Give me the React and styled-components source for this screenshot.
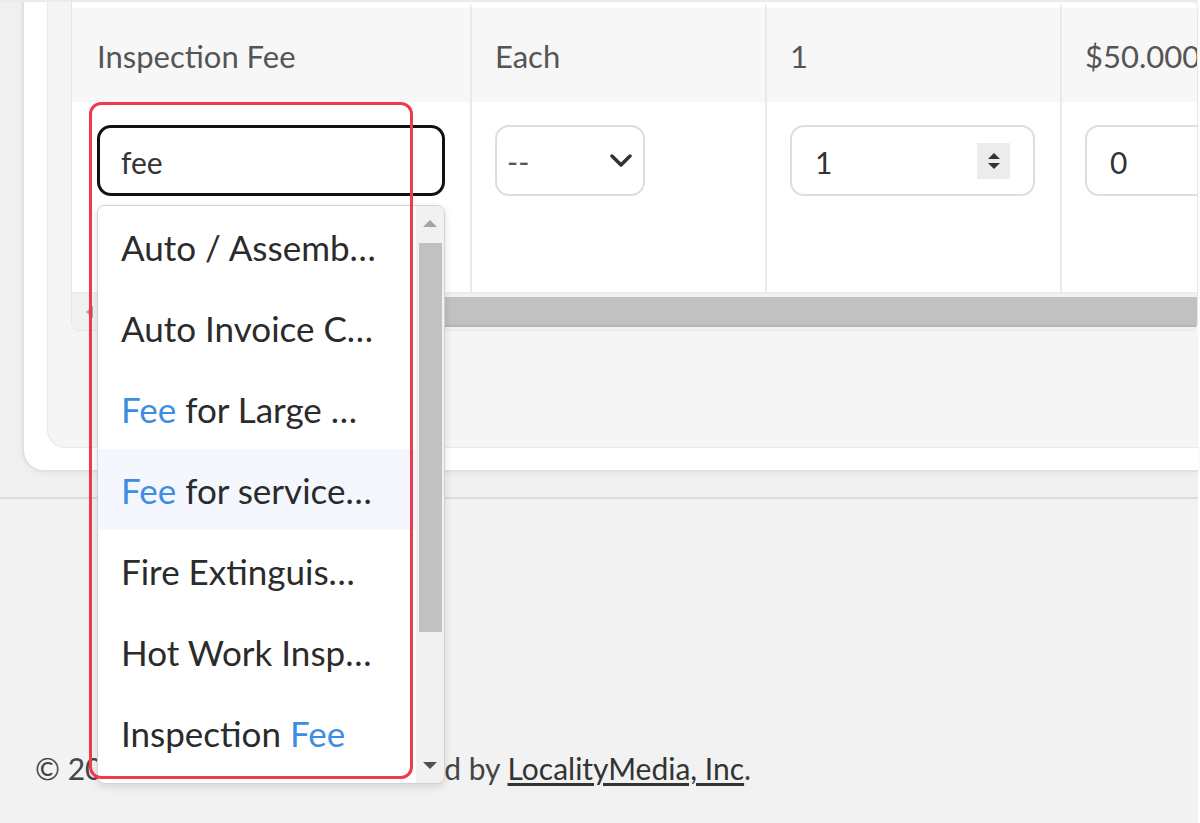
import React from "react";
import styled, { createGlobalStyle } from "styled-components";

const GlobalStyle = createGlobalStyle`
  html, body {
    margin: 0;
    padding: 0;
  }
  body {
    width: 1200px;
    height: 823px;
    overflow: hidden;
    background: #fff;
    font-family: Lato, "Open Sans", sans-serif;
    color: #333;
  }
  * {
    box-sizing: border-box;
  }
`;

const options = [
  { text: "Auto / Assemb…" },
  { text: "Auto Invoice C…" },
  { pre: "", match: "Fee", text: " for Large …" },
  { pre: "", match: "Fee", text: " for service…", hover: true },
  { text: "Fire Extinguis…" },
  { text: "Hot Work Insp…" },
  { pre: "Inspection ", match: "Fee", text: "" },
];

const App = () => {
  return (
    <Page>
      <GlobalStyle />
      <Main>
        <Card>
          <Panel>
            <TableWrap>
              <Grid>
                <HeadCell first>Inspection Fee</HeadCell>
                <HeadCell>Each</HeadCell>
                <HeadCell>1</HeadCell>
                <HeadCell>$50.000</HeadCell>

                <BodyCell first>
                  <SearchInput>fee</SearchInput>
                </BodyCell>
                <BodyCell>
                  <SelectBox>
                    <span>--</span>
                    <svg width="22" height="14" viewBox="0 0 22 14">
                      <polyline
                        points="2,2 11,11 20,2"
                        fill="none"
                        stroke="#333"
                        strokeWidth="3.5"
                        strokeLinecap="round"
                        strokeLinejoin="round"
                      />
                    </svg>
                  </SelectBox>
                </BodyCell>
                <BodyCell>
                  <NumberBox>
                    <span>1</span>
                    <Spinner>
                      <svg width="16" height="26" viewBox="0 0 16 26">
                        <polygon points="8,5 14,11 2,11" fill="#333" />
                        <polygon points="2,15 14,15 8,21" fill="#333" />
                      </svg>
                    </Spinner>
                  </NumberBox>
                </BodyCell>
                <BodyCell>
                  <NumberBox wide>
                    <span>0</span>
                  </NumberBox>
                </BodyCell>
              </Grid>
              <HScroll>
                <ScrollArrow>
                  <svg width="10" height="14" viewBox="0 0 10 14">
                    <polygon points="2,7 9,1 9,13" fill="#a3a3a3" />
                  </svg>
                </ScrollArrow>
                <HThumb />
              </HScroll>
            </TableWrap>
          </Panel>
        </Card>
      </Main>
      <Footer>
        © 2024 Permit Portals. Powered by{" "}
        <FooterLink href="#">LocalityMedia, Inc</FooterLink>.
      </Footer>

      <Dropdown>
        <OptionList>
          {options.map((o, i) => (
            <Option key={i} hover={o.hover}>
              {o.pre}
              {o.match && <Match>{o.match}</Match>}
              {o.text}
            </Option>
          ))}
        </OptionList>
        <VScroll>
          <VArrow>
            <svg width="16" height="10" viewBox="0 0 16 10">
              <polygon points="1,9 8,2 15,9" fill="#a3a3a3" />
            </svg>
          </VArrow>
          <VThumb />
          <VSpace />
          <VArrow>
            <svg width="16" height="10" viewBox="0 0 16 10">
              <polygon points="1,1 15,1 8,8" fill="#505050" />
            </svg>
          </VArrow>
        </VScroll>
      </Dropdown>
      <Callout />
    </Page>
  );
};

export default App;

const Page = styled.div`
  position: relative;
  width: 1198px;
  height: 823px;
  display: flex;
  flex-direction: column;
  background: #f2f2f2;
`;

const Main = styled.main`
  background: #f0f0f0;
  border-top: 2px solid #ebebed;
  border-bottom: 2px solid #dcdcdc;
  padding: 0 0 25px 22px;
`;

const Card = styled.section`
  background: #fff;
  border-left: 2px solid #e1e1e1;
  border-bottom: 2px solid #e1e1e1;
  border-radius: 0 0 0 22px;
  padding: 0 0 22px 23px;
  box-shadow: 0 2px 4px rgba(0, 0, 0, 0.04);
`;

const Panel = styled.div`
  background: #f5f5f5;
  border-left: 1px solid #e9e9e9;
  border-bottom: 1px solid #e9e9e9;
  border-radius: 0 0 0 18px;
  padding: 0 0 116px 23px;
`;

const TableWrap = styled.div`
  background: #fff;
  border: 1px solid #e6e6e6;
  border-top: none;
  border-radius: 0 8px 8px 8px;
  overflow: hidden;
`;

const Grid = styled.div`
  display: grid;
  grid-template-columns: 398px 295px 295px 300px;
  grid-template-rows: 100px 192px;
`;

const HeadCell = styled.div`
  display: flex;
  align-items: center;
  background: #f7f7f7;
  background-clip: padding-box;
  border-top: 6px solid #fff;
  border-left: ${(p) => (p.first ? "none" : "2px solid #e9e9e9")};
  padding: 2px 0 0 ${(p) => (p.first ? "25px" : "23px")};
  font-size: 31px;
  color: #555;
  white-space: nowrap;
`;

const BodyCell = styled.div`
  display: flex;
  align-items: flex-start;
  background: #fff;
  border-left: ${(p) => (p.first ? "none" : "2px solid #e9e9e9")};
  border-bottom: 2px solid #ececec;
  padding: 23px 0 0 ${(p) => (p.first ? "25px" : "23px")};
`;

const SearchInput = styled.div`
  width: 348px;
  height: 71px;
  border: 3px solid #111;
  border-radius: 14px;
  display: flex;
  align-items: center;
  padding: 3px 0 0 21px;
  font-size: 30px;
  color: #333;
`;

const SelectBox = styled.div`
  width: 150px;
  height: 71px;
  border: 2px solid #dedede;
  border-radius: 14px;
  display: flex;
  align-items: center;
  justify-content: space-between;
  padding: 0 11px 0 10px;
  font-size: 30px;
  color: #555;
`;

const NumberBox = styled.div`
  width: ${(p) => (p.wide ? "300px" : "245px")};
  height: 71px;
  border: 2px solid #dedede;
  border-radius: 14px;
  display: flex;
  align-items: center;
  justify-content: space-between;
  padding: 2px 23px 0 23px;
  font-size: 30px;
  color: #333;
`;

const Spinner = styled.span`
  width: 33px;
  height: 36px;
  margin-top: -2px;
  background: #ececec;
  display: flex;
  align-items: center;
  justify-content: center;
`;

const HScroll = styled.div`
  height: 36px;
  background: #f1f1f1;
  display: flex;
  align-items: center;
`;

const ScrollArrow = styled.div`
  width: 34px;
  display: flex;
  justify-content: center;
`;

const HThumb = styled.div`
  flex: 1;
  height: 30px;
  background: #c1c1c1;
  border-bottom: 2px solid #b5b5b5;
`;

const Footer = styled.footer`
  flex: 1;
  background: #f2f2f2;
  padding: 251px 0 0 35px;
  font-size: 30px;
  line-height: 36px;
  color: #444;
  white-space: nowrap;
`;

const FooterLink = styled.a`
  color: #333;
  text-decoration: underline;
  text-underline-offset: 3px;
`;

const Dropdown = styled.div`
  position: absolute;
  left: 97px;
  top: 205px;
  width: 348px;
  height: 579px;
  display: flex;
  background: #fff;
  border: 1px solid #d2d2d2;
  border-radius: 8px;
  box-shadow: 0 3px 8px rgba(0, 0, 0, 0.12);
  overflow: hidden;
  z-index: 5;
`;

const OptionList = styled.div`
  flex: 1;
  overflow: hidden;
`;

const Option = styled.div`
  height: 81px;
  display: flex;
  align-items: center;
  padding-left: 23px;
  font-size: 35px;
  color: #2b2b2b;
  white-space: pre;
  background: ${(p) => (p.hover ? "#f4f7fd" : "#fff")};
`;

const Match = styled.span`
  color: #3d8ee3;
`;

const VScroll = styled.div`
  width: 28px;
  background: #f1f1f1;
  display: flex;
  flex-direction: column;
`;

const VArrow = styled.div`
  height: 34px;
  display: flex;
  align-items: center;
  justify-content: center;
`;

const VThumb = styled.div`
  height: 389px;
  margin: 3px 2px 0 3px;
  background: #c1c1c1;
`;

const VSpace = styled.div`
  flex: 1;
`;

const Callout = styled.div`
  position: absolute;
  left: 89px;
  top: 102px;
  width: 324px;
  height: 677px;
  border: 3px solid #ef3a4c;
  border-radius: 12px;
  pointer-events: none;
  z-index: 10;
`;
